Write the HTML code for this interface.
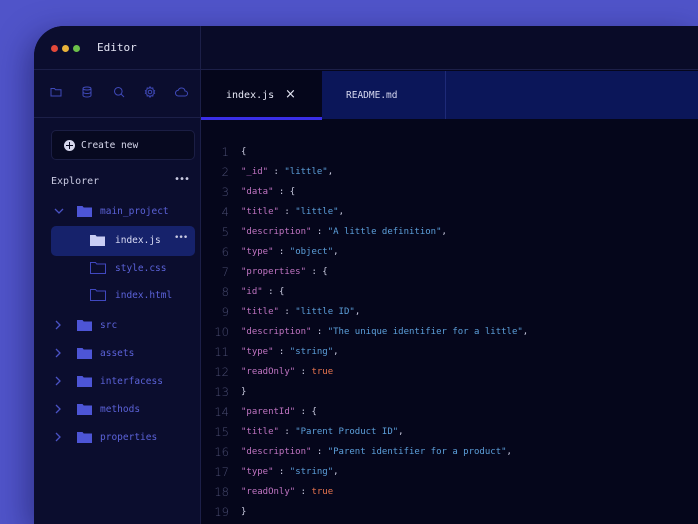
<!DOCTYPE html>
<html style="width:698px;height:524px;overflow:hidden"><head><style>
*{margin:0;padding:0;box-sizing:border-box}
body{width:698px;height:524px;overflow:hidden;background:#5054c9;position:relative;font-family:"DejaVu Sans Mono","Liberation Mono",monospace}
.win{position:absolute;left:34px;top:26px;width:664px;height:498px;border-radius:30px 0 0 0;background:#0a0c2c;overflow:hidden;box-shadow:-6px 8px 30px rgba(20,20,80,.5)}
.side{position:absolute;left:0;top:0;width:167px;height:100%;background:#0b0d2e;border-right:1px solid #1c1f48}
.hdr{position:absolute;left:0;top:0;width:167px;height:44px;border-bottom:1px solid #1c1f48}
.dot{position:absolute;top:19px;width:7px;height:7px;border-radius:50%}
.title{position:absolute;left:63px;top:15px;color:#e2e3f2;font-size:11px}
.icons{position:absolute;left:0;top:44px;width:167px;height:48px;border-bottom:1px solid #1c1f48}
.icons svg{position:absolute;top:16px}
.create{position:absolute;left:17px;top:104px;width:144px;height:30px;border:1px solid #1b1e44;border-radius:5px;background:#070920;color:#d7d8ec;font-size:9.5px}
.create span{position:absolute;left:29px;top:9px}
.plus{position:absolute;left:12px;top:9px;width:11px;height:11px;border-radius:50%;background:#d7d8ee}
.plus:before,.plus:after{content:"";position:absolute;background:#070920;left:5px;top:2px;width:1.4px;height:7px}
.plus:after{left:2px;top:5px;width:7px;height:1.4px}
.exp{position:absolute;left:17px;top:150px;color:#c9cae2;font-size:10px}
.more{position:absolute;color:#c9cae2;font-size:10px;letter-spacing:-1px}
.item{position:absolute;font-size:9.5px;color:#5b62d8}
.sel{position:absolute;left:17px;top:200px;width:144px;height:30px;background:#16226b;border-radius:5px}
.main{position:absolute;left:167px;top:0;right:0;height:100%;background:#05061b}
.mtop{position:absolute;left:0;top:0;right:0;height:44px;background:#090b28;border-bottom:1px solid #1c1f48}
.tab1{position:absolute;left:0;top:45px;width:121px;height:49px;background:#05061b;border-bottom:3px solid #3a2ee8;color:#e6e7f5;font-size:10px}
.tab2{position:absolute;left:121px;top:45px;width:124px;height:48px;background:#0b1659;border-right:1px solid #1e2a78;color:#d6d8f0;font-size:9.5px}
.tabrest{position:absolute;left:245px;top:45px;right:0;height:48px;background:#0b1659}
.code{position:absolute;left:0;top:119px}
.ln{position:absolute;width:28px;text-align:right;color:#4a4d72;font-family:"DejaVu Sans","Liberation Sans",sans-serif;font-size:11.5px;font-weight:300}
.cl{position:absolute;left:40px;font-size:9px;color:#c9cadf;white-space:pre}
.k{color:#c074c2}.s{color:#5c9fda}.t{color:#e8744f}
</style></head><body>
<div class="win">
 <div class="side">
  <div class="hdr">
   <div class="dot" style="left:17px;background:#e2483a"></div>
   <div class="dot" style="left:28px;background:#e8b23a"></div>
   <div class="dot" style="left:39px;background:#6cc04a"></div>
   <div class="title">Editor</div>
  </div>
  <div class="icons">
   <svg style="left:16px" width="12" height="12" viewBox="0 0 12 12" fill="none" stroke="#3f49b8" stroke-width="1"><path d="M1 2.5h3.5l1 1.2H11V10H1z"/></svg>
   <svg style="left:47px" width="12" height="12" viewBox="0 0 12 12" fill="none" stroke="#3f49b8" stroke-width="1"><ellipse cx="6" cy="2.5" rx="4" ry="1.5"/><path d="M2 2.5v7c0 .8 1.8 1.5 4 1.5s4-.7 4-1.5v-7M2 6c0 .8 1.8 1.5 4 1.5S10 6.8 10 6"/></svg>
   <svg style="left:79px" width="12" height="12" viewBox="0 0 12 12" fill="none" stroke="#3f49b8" stroke-width="1"><circle cx="5.3" cy="5.3" r="3.8"/><path d="M8 8l3 3"/></svg>
   <svg style="left:110px" width="12" height="12" viewBox="0 0 12 12" fill="none" stroke="#3f49b8" stroke-width="1"><circle cx="6" cy="6" r="1.8"/><path d="M6 .8l1 1.5 1.8-.3.3 1.8 1.5 1-1 1.2 1 1.2-1.5 1-.3 1.8-1.8-.3L6 11.2l-1-1.5-1.8.3-.3-1.8-1.5-1 1-1.2-1-1.2 1.5-1 .3-1.8 1.8.3z"/></svg>
   <svg style="left:141px" width="13" height="12" viewBox="0 0 13 12" fill="none" stroke="#3f49b8" stroke-width="1"><path d="M3.5 10h6.5a2.5 2.5 0 000-5 3.5 3.5 0 00-6.7-.8A2.9 2.9 0 003.5 10z"/></svg>
  </div>
  <div class="create"><div class="plus"></div><span>Create new</span></div>
  <div class="exp">Explorer</div>
  <div class="more" style="left:140px;top:148px">•••</div>
  <div class="sel"></div>
  <svg style="position:absolute;left:20px;top:181px" width="10" height="8" viewBox="0 0 10 8" fill="none" stroke="#4a52c4" stroke-width="1.3"><path d="M1 2l4 4 4-4"/></svg>
  <svg style="position:absolute;left:43px;top:179px" width="15" height="12" viewBox="0 0 15 12"><path d="M0 1h5.5l1.2 1.5H15V12H0z" fill="#4d55d6"/></svg>
  <div class="item" style="left:66px;top:180px">main_project</div>
  <svg style="position:absolute;left:56px;top:208px" width="15" height="12" viewBox="0 0 15 12"><path d="M0 1h5.5l1.2 1.5H15V12H0z" fill="#c9cdf4"/></svg>
  <div class="item" style="left:81px;top:209px;color:#dadcf5">index.js</div>
  <div class="more" style="left:140px;top:207px;font-size:9px">•••</div>
  <svg style="position:absolute;left:56px;top:235px" width="16" height="13" viewBox="0 0 16 13" fill="none" stroke="#4048c0" stroke-width="1"><path d="M.5 1.5h5l1.2 1.5h8.8v9.5H.5z"/></svg>
  <div class="item" style="left:81px;top:237px">style.css</div>
  <svg style="position:absolute;left:56px;top:262px" width="16" height="13" viewBox="0 0 16 13" fill="none" stroke="#4048c0" stroke-width="1"><path d="M.5 1.5h5l1.2 1.5h8.8v9.5H.5z"/></svg>
  <div class="item" style="left:81px;top:264px">index.html</div>
  <svg style="position:absolute;left:20px;top:294px" width="8" height="140" viewBox="0 0 8 140" fill="none" stroke="#4a52c4" stroke-width="1.3"><path d="M2 1l4 4-4 4M2 29l4 4-4 4M2 57l4 4-4 4M2 85l4 4-4 4M2 113l4 4-4 4"/></svg>
  <svg style="position:absolute;left:43px;top:293px" width="15" height="140" viewBox="0 0 15 140" fill="#4d55d6"><path d="M0 1h5.5l1.2 1.5H15V12H0zM0 29h5.5l1.2 1.5H15V40H0zM0 57h5.5l1.2 1.5H15V68H0zM0 85h5.5l1.2 1.5H15V96H0zM0 113h5.5l1.2 1.5H15V124H0z"/></svg>
  <div class="item" style="left:66px;top:294px">src</div>
  <div class="item" style="left:66px;top:322px">assets</div>
  <div class="item" style="left:66px;top:350px">interfacess</div>
  <div class="item" style="left:66px;top:378px">methods</div>
  <div class="item" style="left:66px;top:406px">properties</div>
 </div>
 <div class="main">
  <div class="mtop"></div>
  <div class="tab1"><span style="position:absolute;left:25px;top:19px">index.js</span><span style="position:absolute;left:84px;top:16px;font-size:13px;font-family:'DejaVu Sans',sans-serif">×</span></div>
  <div class="tab2"><span style="position:absolute;left:24px;top:19px">README.md</span></div>
  <div class="tabrest"></div>
  <div class="code">
   <div class="ln" style="top:0">1</div><div class="cl" style="top:2px">{</div>
   <div class="ln" style="top:20px">2</div><div class="cl" style="top:22px"><span class="k">"_id"</span> : <span class="s">"little"</span>,</div>
   <div class="ln" style="top:40px">3</div><div class="cl" style="top:42px"><span class="k">"data"</span> : {</div>
   <div class="ln" style="top:60px">4</div><div class="cl" style="top:62px"><span class="k">"title"</span> : <span class="s">"little"</span>,</div>
   <div class="ln" style="top:80px">5</div><div class="cl" style="top:82px"><span class="k">"description"</span> : <span class="s">"A little definition"</span>,</div>
   <div class="ln" style="top:100px">6</div><div class="cl" style="top:102px"><span class="k">"type"</span> : <span class="s">"object"</span>,</div>
   <div class="ln" style="top:120px">7</div><div class="cl" style="top:122px"><span class="k">"properties"</span> : {</div>
   <div class="ln" style="top:140px">8</div><div class="cl" style="top:142px"><span class="k">"id"</span> : {</div>
   <div class="ln" style="top:160px">9</div><div class="cl" style="top:162px"><span class="k">"title"</span> : <span class="s">"little ID"</span>,</div>
   <div class="ln" style="top:180px">10</div><div class="cl" style="top:182px"><span class="k">"description"</span> : <span class="s">"The unique identifier for a little"</span>,</div>
   <div class="ln" style="top:200px">11</div><div class="cl" style="top:202px"><span class="k">"type"</span> : <span class="s">"string"</span>,</div>
   <div class="ln" style="top:220px">12</div><div class="cl" style="top:222px"><span class="k">"readOnly"</span> : <span class="t">true</span></div>
   <div class="ln" style="top:240px">13</div><div class="cl" style="top:242px">}</div>
   <div class="ln" style="top:260px">14</div><div class="cl" style="top:262px"><span class="k">"parentId"</span> : {</div>
   <div class="ln" style="top:280px">15</div><div class="cl" style="top:282px"><span class="k">"title"</span> : <span class="s">"Parent Product ID"</span>,</div>
   <div class="ln" style="top:300px">16</div><div class="cl" style="top:302px"><span class="k">"description"</span> : <span class="s">"Parent identifier for a product"</span>,</div>
   <div class="ln" style="top:320px">17</div><div class="cl" style="top:322px"><span class="k">"type"</span> : <span class="s">"string"</span>,</div>
   <div class="ln" style="top:340px">18</div><div class="cl" style="top:342px"><span class="k">"readOnly"</span> : <span class="t">true</span></div>
   <div class="ln" style="top:360px">19</div><div class="cl" style="top:362px">}</div>
  </div>
 </div>
</div>
</body></html>
